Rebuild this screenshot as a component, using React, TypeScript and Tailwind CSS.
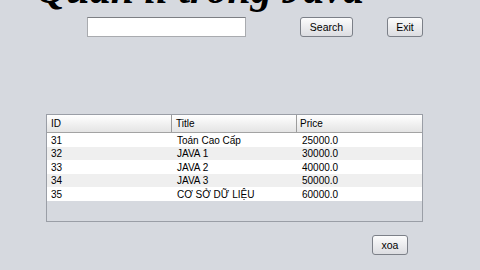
import React from "react";

const rows = [
  { id: "31", title: "Toán Cao Cấp", price: "25000.0" },
  { id: "32", title: "JAVA 1", price: "30000.0" },
  { id: "33", title: "JAVA 2", price: "40000.0" },
  { id: "34", title: "JAVA 3", price: "50000.0" },
  { id: "35", title: "CƠ SỞ DỮ LIỆU", price: "60000.0" },
];

function Btn({ label, w }: { label: string; w: string }) {
  return (
    <button
      className={`${w} h-[20px] rounded-[3px] border border-[#7c8088] bg-gradient-to-b from-[#fcfcfc] to-[#dcdde1] text-[10.5px] leading-none text-black flex items-center justify-center`}
    >
      {label}
    </button>
  );
}

export default function App() {
  return (
    <div className="w-[480px] h-[270px] overflow-hidden bg-[#d6d9df] font-['Liberation_Sans',Arial,sans-serif] text-[10px] text-black">
      {/* title, mostly cut off by the window top */}
      <div className="h-[12px] overflow-hidden pl-[36px]">
        <div className="-mt-[33px] font-['Liberation_Serif',serif] font-bold italic text-[42px] leading-[44px] whitespace-nowrap">
          Quản lí trong Java
        </div>
      </div>

      <div className="mt-[5px] flex items-start">
        <div className="ml-[87px] w-[159px] h-[20px] bg-white border border-[#a9abaf] border-t-[#7d7f84]" />
        <div className="ml-[54px]">
          <Btn label="Search" w="w-[53px]" />
        </div>
        <div className="ml-[34px]">
          <Btn label="Exit" w="w-[36px]" />
        </div>
      </div>

      <div className="mt-[77px] ml-[46px] w-[377px] h-[108px] border border-[#9a9ea6] flex flex-col">
        <div className="h-[18px] flex border-b border-[#a3a3a3] bg-gradient-to-b from-[#ffffff] to-[#e4e4e4]">
          <div className="w-[125px] border-r border-[#9c9c9c] pl-[4px] flex items-center">ID</div>
          <div className="w-[125px] border-r border-[#9c9c9c] pl-[4px] flex items-center">Title</div>
          <div className="flex-1 pl-[3px] flex items-center">Price</div>
        </div>
        {rows.map((r, i) => (
          <div
            key={r.id}
            className={`h-[13.5px] flex items-center pt-[1px] ${i % 2 === 1 ? "bg-[#efefef]" : "bg-white"}`}
          >
            <div className="w-[126px] pl-[4px]">{r.id}</div>
            <div className="w-[125px] pl-[4px] whitespace-nowrap">{r.title}</div>
            <div className="flex-1 pl-[4px]">{r.price}</div>
          </div>
        ))}
      </div>

      <div className="mt-[13px] ml-[372px]">
        <Btn label="xoa" w="w-[36px]" />
      </div>
    </div>
  );
}
